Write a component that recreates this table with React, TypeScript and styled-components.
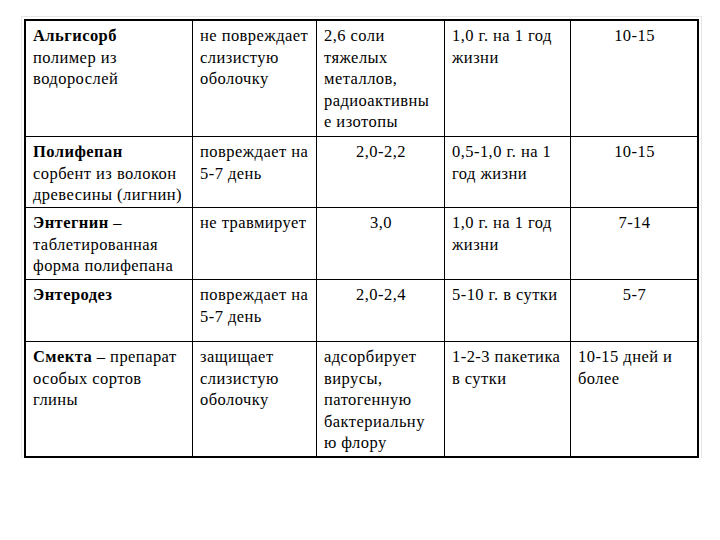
import React from 'react';
import styled, { createGlobalStyle } from 'styled-components';

const GlobalStyle = createGlobalStyle`
  html, body {
    margin: 0;
    padding: 0;
    background: #ffffff;
    font-family: "Liberation Serif", serif;
  }
`;

type Part = { text: string; bold?: boolean };
type Line = Part[];
type CellData = { lines: Line[]; center?: boolean };
type RowData = { height: number; cells: CellData[] };

const t = (text: string): Line => [{ text }];
const b = (text: string, rest?: string): Line =>
  rest ? [{ text, bold: true }, { text: rest }] : [{ text, bold: true }];

const rows: RowData[] = [
  {
    height: 116,
    cells: [
      { lines: [b('Альгисорб'), t('полимер из'), t('водорослей')] },
      { lines: [t('не повреждает'), t('слизистую'), t('оболочку')] },
      { lines: [t('2,6 соли'), t('тяжелых'), t('металлов,'), t('радиоактивны'), t('е изотопы')] },
      { lines: [t('1,0 г. на 1 год'), t('жизни')] },
      { lines: [t('10-15')], center: true },
    ],
  },
  {
    height: 71,
    cells: [
      { lines: [b('Полифепан'), t('сорбент из волокон'), t('древесины (лигнин)')] },
      { lines: [t('повреждает на'), t('5-7 день')] },
      { lines: [t('2,0-2,2')], center: true },
      { lines: [t('0,5-1,0 г. на 1'), t('год жизни')] },
      { lines: [t('10-15')], center: true },
    ],
  },
  {
    height: 72,
    cells: [
      { lines: [b('Энтегнин', ' –'), t('таблетированная'), t('форма полифепана')] },
      { lines: [t('не травмирует')] },
      { lines: [t('3,0')], center: true },
      { lines: [t('1,0 г. на 1 год'), t('жизни')] },
      { lines: [t('7-14')], center: true },
    ],
  },
  {
    height: 62,
    cells: [
      { lines: [b('Энтеродез')] },
      { lines: [t('повреждает на'), t('5-7 день')] },
      { lines: [t('2,0-2,4')], center: true },
      { lines: [t('5-10 г. в сутки')] },
      { lines: [t('5-7')], center: true },
    ],
  },
  {
    height: 114,
    cells: [
      { lines: [b('Смекта', ' – препарат'), t('особых сортов'), t('глины')] },
      { lines: [t('защищает'), t('слизистую'), t('оболочку')] },
      { lines: [t('адсорбирует'), t('вирусы,'), t('патогенную'), t('бактериальну'), t('ю флору')] },
      { lines: [t('1-2-3 пакетика'), t('в сутки')] },
      { lines: [t('10-15 дней и'), t('более')] },
    ],
  },
];

const Page = styled.div`
  padding: 19px 0 0 24px;
  color: #000000;
`;

const Table = styled.div`
  width: 671px;
  border: 2px solid #000000;
  outline: 1px solid #e6e6e6;
  outline-offset: 2px;
  display: grid;
  grid-template-columns: 167px 124px 128px 126px 126px;
`;

const Cell = styled.div<{ $center?: boolean; $lastCol: boolean; $lastRow: boolean; $h: number }>`
  box-sizing: border-box;
  height: ${(p) => p.$h}px;
  padding: 4px 6px 0 7px;
  border-right: ${(p) => (p.$lastCol ? 'none' : '1px solid #000000')};
  border-bottom: ${(p) => (p.$lastRow ? 'none' : '1px solid #000000')};
  text-align: ${(p) => (p.$center ? 'center' : 'left')};
  font-family: "Liberation Serif", serif;
  font-size: 16.5px;
  letter-spacing: 0.45px;
  line-height: 21.5px;
  overflow: hidden;
`;

const TextLine = styled.div`
  white-space: nowrap;
`;

const Strong = styled.span`
  font-weight: bold;
`;

export default function App() {
  return (
    <>
      <GlobalStyle />
      <Page>
        <Table>
          {rows.map((row, ri) =>
            row.cells.map((cell, ci) => (
              <Cell
                key={`${ri}-${ci}`}
                $center={cell.center}
                $lastCol={ci === row.cells.length - 1}
                $lastRow={ri === rows.length - 1}
                $h={row.height}
              >
                {cell.lines.map((line, li) => (
                  <TextLine key={li}>
                    {line.map((part, pi) =>
                      part.bold ? <Strong key={pi}>{part.text}</Strong> : <span key={pi}>{part.text}</span>
                    )}
                  </TextLine>
                ))}
              </Cell>
            ))
          )}
        </Table>
      </Page>
    </>
  );
}
